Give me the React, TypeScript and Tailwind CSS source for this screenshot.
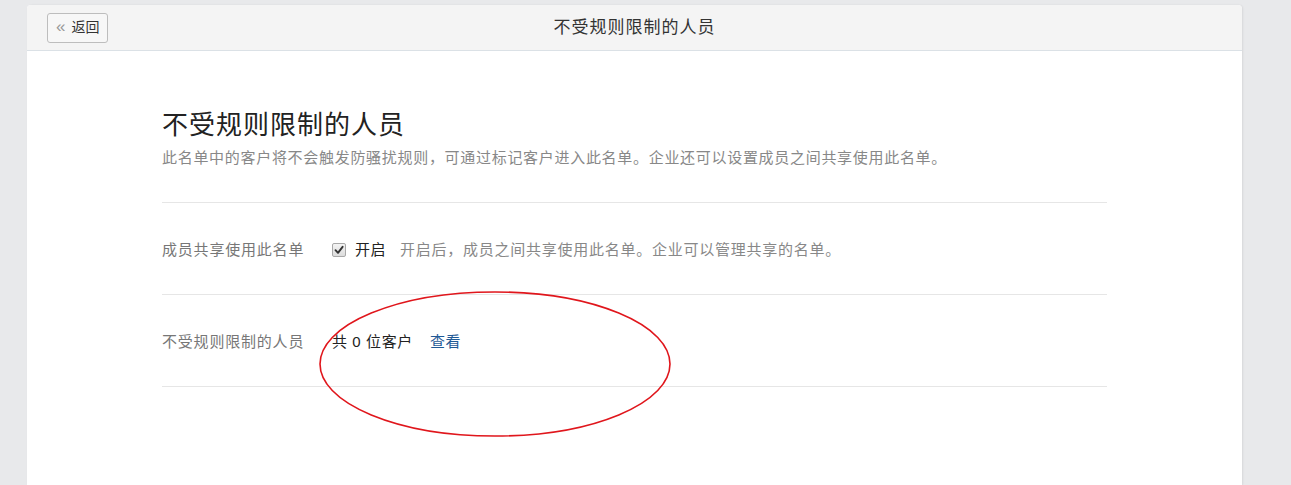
const font = { fontFamily: '"Liberation Sans", "Noto Sans CJK SC", sans-serif' };

function BackButton() {
  return (
    <button className="flex items-center gap-[6px] h-[30px] px-[8px] border border-[#bdbdbd] rounded-[3px] bg-[#f7f7f7] text-[14px] text-[#333]">
      <span className="text-[#999] text-[17px] leading-none -mt-[2px]">«</span>
      <span>返回</span>
    </button>
  );
}

function Check() {
  return (
    <span className="flex items-center justify-center w-[14px] h-[14px] border border-[#a8a8a8] rounded-[2px] bg-gradient-to-b from-[#f4f4f4] to-[#dcdcdc]">
      <svg width="10" height="10" viewBox="0 0 10 10">
        <path d="M1.5 5.2 L4 7.8 L8.6 1.8" fill="none" stroke="#333" strokeWidth="1.9" strokeLinecap="round" strokeLinejoin="round" />
      </svg>
    </span>
  );
}

function Row({ label, children }: { label: string; children: React.ReactNode }) {
  return (
    <div className="flex items-center h-[92px] border-b border-[#e6e6e6] pt-[4px]">
      <div className="w-[170px] text-[15px] text-[#777] tracking-[0.8px]">{label}</div>
      <div className="flex items-center text-[15px]">{children}</div>
    </div>
  );
}

export default function App() {
  return (
    <div className="w-[1291px] h-[485px] bg-[#e8e9eb] overflow-hidden" style={font}>
      <div className="relative ml-[27px] mt-[5px] w-[1215px] h-[480px] bg-white rounded-t-[4px] shadow-[1px_0_2px_rgba(0,0,0,0.08)]">
        <div className="relative flex items-center h-[46px] px-[20px] bg-[#f4f4f4] border-b border-[#dbe1e6] rounded-t-[4px]">
          <BackButton />
          <div className="absolute left-0 right-0 text-center text-[17px] text-[#333] tracking-[1px] pointer-events-none">
            不受规则限制的人员
          </div>
        </div>

        <div className="mx-[135px] pt-[56px]">
          <h1 className="text-[26px] leading-[36px] text-[#222] tracking-[1px]">不受规则限制的人员</h1>
          <p className="mt-[4px] text-[15px] text-[#888] tracking-[0.7px]">
            此名单中的客户将不会触发防骚扰规则，可通过标记客户进入此名单。企业还可以设置成员之间共享使用此名单。
          </p>
          <div className="mt-[32px] border-t border-[#e6e6e6]" />

          <Row label="成员共享使用此名单">
            <Check />
            <span className="ml-[9px] text-[#222] tracking-[0.5px]">开启</span>
            <span className="ml-[14px] text-[#888] tracking-[0.75px]">开启后，成员之间共享使用此名单。企业可以管理共享的名单。</span>
          </Row>

          <div className="h-[91px]">
            <Row label="不受规则限制的人员">
              <span className="text-[#222] tracking-[0.6px]">共 0 位客户</span>
              <a className="ml-[17px] text-[#1f5a96] cursor-pointer tracking-[0.5px]">查看</a>
            </Row>
          </div>
        </div>

        <svg className="absolute left-[291px] top-[285px] pointer-events-none" width="354" height="148" viewBox="0 0 354 148">
          <ellipse cx="177" cy="74" rx="175" ry="72" fill="none" stroke="#e0161c" strokeWidth="1.6" />
        </svg>
      </div>
    </div>
  );
}
